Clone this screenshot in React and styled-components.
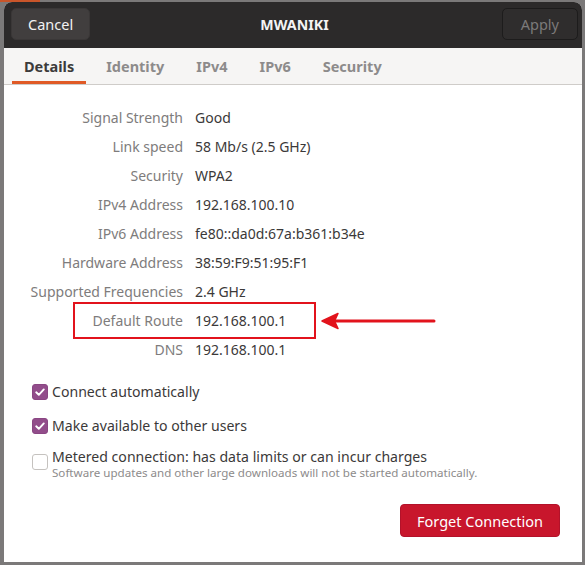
import React from "react";
import styled, { createGlobalStyle } from "styled-components";

const Global = createGlobalStyle`
  html, body { margin: 0; padding: 0; }
  body {
    background: #7b7979;
    font-family: "Noto Sans", "DejaVu Sans", sans-serif;
    width: 585px; height: 565px; overflow: hidden;
  }
`;

const Screen = styled.div`
  position: relative;
  width: 585px;
  height: 565px;
  display: flex;
  flex-direction: column;
  padding: 2px 3px 3px 4px;
  box-sizing: border-box;
  background: linear-gradient(to right, #c9552a 0 40px, #7b7979 40px) top / 100% 2px no-repeat, #7b7979;
`;

const Dialog = styled.div`
  position: relative;
  flex: 1;
  display: flex;
  flex-direction: column;
  background: #ffffff;
  border-radius: 8px 8px 0 0;
  overflow: hidden;
`;

const Header = styled.div`
  height: 46px;
  background: #2c2a2a;
  display: grid;
  grid-template-columns: 1fr auto 1fr;
  align-items: start;
  padding: 6px 4px 0 7px;
  box-sizing: border-box;
`;

const HeaderButton = styled.div`
  height: 32px;
  box-sizing: border-box;
  padding: 0 ${(p) => (p.disabled ? 18 : 16)}px;
  display: flex;
  align-items: center;
  justify-self: ${(p) => (p.disabled ? "end" : "start")};
  border-radius: 5px;
  font-size: 14.5px;
  background: ${(p) => (p.disabled ? "#2f2d2d" : "#413e3e")};
  border: 1px solid ${(p) => (p.disabled ? "#1d1c1c" : "#3a3737")};
  color: ${(p) => (p.disabled ? "#7c7a7a" : "#f2f2f2")};
`;

const Title = styled.div`
  color: #f4f4f4;
  font-weight: 700;
  font-size: 14.2px;
  height: 32px;
  display: flex;
  align-items: center;
`;

const Tabs = styled.div`
  height: 36px;
  background: #f6f5f4;
  border-bottom: 1px solid #cfccc9;
  display: flex;
  align-items: stretch;
  padding-left: 8px;
  gap: 8px;
`;

const Tab = styled.div`
  position: relative;
  display: flex;
  align-items: center;
  padding: 0 12px;
  font-size: 14.5px;
  font-weight: 700;
  color: ${(p) => (p.active ? "#3c3b3b" : "#8d8b8b")};
  &::after {
    content: "";
    position: absolute;
    left: 0;
    right: 0;
    bottom: 0;
    height: 3px;
    background: ${(p) => (p.active ? "#e05a26" : "transparent")};
  }
`;

const Content = styled.div`
  flex: 1;
  display: flex;
  flex-direction: column;
  padding-top: 18px;
  position: relative;
`;

const InfoGrid = styled.div`
  display: grid;
  grid-template-columns: 179px 1fr;
  column-gap: 12px;
  grid-auto-rows: 29px;
  align-items: center;
  font-size: 14px;
`;

const Label = styled.div`
  text-align: right;
  color: #7e7c7c;
`;

const Value = styled.div`
  color: #3b3939;
`;

const Options = styled.div`
  display: flex;
  flex-direction: column;
  padding-left: 28px;
  margin-top: 18px;
`;

const Option = styled.div`
  display: flex;
  align-items: ${(p) => (p.top ? "flex-start" : "center")};
  gap: 4px;
  min-height: 20px;
  margin-top: ${(p) => p.mt || 0}px;
`;

const Box = styled.div`
  width: 16px;
  height: 16px;
  box-sizing: border-box;
  border-radius: 3px;
  flex: none;
  display: flex;
  align-items: center;
  justify-content: center;
  margin-top: ${(p) => (p.offset ? "6px" : "0")};
  background: ${(p) => (p.checked ? "#924d8b" : "#ffffff")};
  border: 1px solid ${(p) => (p.checked ? "#8a4683" : "#c5c2bf")};
`;

const OptText = styled.div`
  display: flex;
  flex-direction: column;
  font-size: 14.1px;
  color: #3b3939;
  line-height: 18px;
`;

const SubText = styled.div`
  font-size: 11.6px;
  color: #8d8b8b;
  line-height: 13px;
`;

const Footer = styled.div`
  display: flex;
  justify-content: flex-end;
  padding-right: 22px;
  margin-top: 25px;
`;

const DangerButton = styled.div`
  height: 33px;
  box-sizing: border-box;
  padding: 0 16px;
  display: flex;
  align-items: center;
  border-radius: 4px;
  background: #c8162c;
  border: 1px solid #b3122a;
  color: #ffffff;
  font-size: 14.5px;
`;

const Highlight = styled.div`
  position: absolute;
  left: 69px;
  top: 217px;
  width: 243px;
  height: 37px;
  box-sizing: border-box;
  border: 2px solid #e2131c;
`;

const Arrow = styled.svg`
  position: absolute;
  left: 316px;
  top: 226px;
`;

const Check = () => (
  <svg width="12" height="12" viewBox="0 0 12 12">
    <path d="M2.2 6.3 L4.8 8.8 L9.8 3.4" fill="none" stroke="#fff" strokeWidth="1.9" strokeLinecap="round" strokeLinejoin="round" />
  </svg>
);

const rows = [
  ["Signal Strength", "Good"],
  ["Link speed", "58 Mb/s (2.5 GHz)"],
  ["Security", "WPA2"],
  ["IPv4 Address", "192.168.100.10"],
  ["IPv6 Address", "fe80::da0d:67a:b361:b34e"],
  ["Hardware Address", "38:59:F9:51:95:F1"],
  ["Supported Frequencies", "2.4 GHz"],
  ["Default Route", "192.168.100.1"],
  ["DNS", "192.168.100.1"],
];

export default function App() {
  return (
    <>
      <Global />
      <Screen>
        <Dialog>
          <Header>
            <HeaderButton>Cancel</HeaderButton>
            <Title>MWANIKI</Title>
            <HeaderButton disabled>Apply</HeaderButton>
          </Header>
          <Tabs>
            <Tab active>Details</Tab>
            <Tab>Identity</Tab>
            <Tab>IPv4</Tab>
            <Tab>IPv6</Tab>
            <Tab>Security</Tab>
          </Tabs>
          <Content>
            <InfoGrid>
              {rows.map(([l, v]) => (
                <React.Fragment key={l}>
                  <Label>{l}</Label>
                  <Value>{v}</Value>
                </React.Fragment>
              ))}
            </InfoGrid>
            <Options>
              <Option>
                <Box checked><Check /></Box>
                <OptText>Connect automatically</OptText>
              </Option>
              <Option mt={14}>
                <Box checked><Check /></Box>
                <OptText>Make available to other users</OptText>
              </Option>
              <Option top mt={12}>
                <Box offset />
                <OptText>
                  Metered connection: has data limits or can incur charges
                  <SubText>Software updates and other large downloads will not be started automatically.</SubText>
                </OptText>
              </Option>
            </Options>
            <Footer>
              <DangerButton>Forget Connection</DangerButton>
            </Footer>
            <Highlight />
            <Arrow width="120" height="20" viewBox="0 0 120 20">
              <path d="M14 10 H114" stroke="#e2131c" strokeWidth="3" strokeLinecap="round" />
              <path d="M2 10 L18 2.5 L14.5 10 L18 17.5 Z" fill="#e2131c" stroke="#e2131c" strokeWidth="1.5" strokeLinejoin="round" />
            </Arrow>
          </Content>
        </Dialog>
      </Screen>
    </>
  );
}
